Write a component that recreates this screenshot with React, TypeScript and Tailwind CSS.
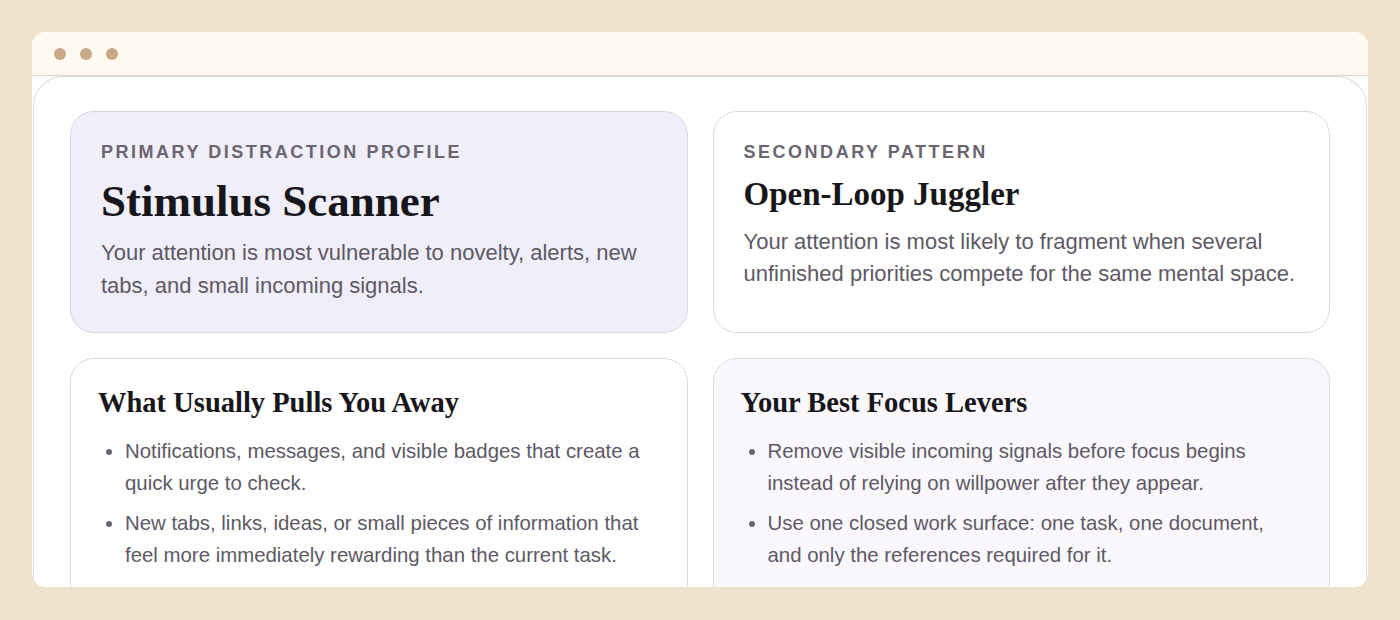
const serif = "font-['Liberation_Serif',_'Times_New_Roman',_serif]";
const sans = "font-['Liberation_Sans',_Arial,_sans-serif]";

function Label({ children }: { children: string }) {
  return (
    <div className={`${sans} text-[18px] font-bold uppercase leading-6 tracking-[0.14em] text-[#6a6571]`}>
      {children}
    </div>
  );
}

function BulletList({ items }: { items: string[] }) {
  return (
    <ul className={`${sans} mt-[15px] flex list-disc flex-col gap-2 pl-[27px] text-[20.4px] leading-8 text-[#5d5965] marker:text-[#6a6571]`}>
      {items.map((item) => (
        <li key={item}>{item}</li>
      ))}
    </ul>
  );
}

export default function App() {
  return (
    <div className="h-[620px] w-[1400px] bg-[#f0e2cc] p-8 pb-[33px]">
      <div className="flex h-full flex-col overflow-hidden rounded-[14px] bg-white">
        <div className="flex h-[44px] shrink-0 items-center gap-[14px] border-b border-[#e6d6bd] bg-[#fef9f1] pl-[22px]">
          <span className="h-3 w-3 rounded-full bg-[#c9a886]" />
          <span className="h-3 w-3 rounded-full bg-[#c9a886]" />
          <span className="h-3 w-3 rounded-full bg-[#c9a886]" />
        </div>
        <div className="mx-px flex-1 overflow-hidden rounded-t-[30px] border border-b-0 border-[#dedbe1] bg-white px-9 pt-[34px]">
          <div className="grid grid-cols-2 gap-[25px]">
            <section className="rounded-[24px] border border-[#d9d5e3] bg-[#f0eef8] px-[30px] pb-[30px] pt-[28px]">
              <Label>Primary Distraction Profile</Label>
              <h1 className={`${serif} mt-[11px] text-[45px] font-bold leading-[52px] text-[#17161a]`}>
                Stimulus Scanner
              </h1>
              <p className={`${sans} mt-[9px] text-[22px] leading-[33px] text-[#5d5965]`}>
                Your attention is most vulnerable to novelty, alerts, new tabs, and small incoming signals.
              </p>
            </section>
            <section className="rounded-[24px] border border-[#dcd9df] bg-white px-[30px] pb-[30px] pt-[28px]">
              <Label>Secondary Pattern</Label>
              <h2 className={`${serif} mt-[11px] text-[33px] font-bold leading-[38px] text-[#17161a]`}>
                Open-Loop Juggler
              </h2>
              <p className={`${sans} mt-[13px] text-[22px] leading-8 text-[#5d5965]`}>
                Your attention is most likely to fragment when several unfinished priorities compete for the same mental space.
              </p>
            </section>
            <section className="h-[260px] rounded-[24px] border border-[#dcd9df] bg-white px-[27px] pt-[27px]">
              <h3 className={`${serif} text-[28.5px] font-bold leading-[34px] text-[#17161a]`}>What Usually Pulls You Away</h3>
              <BulletList
                items={[
                  'Notifications, messages, and visible badges that create a quick urge to check.',
                  'New tabs, links, ideas, or small pieces of information that feel more immediately rewarding than the current task.',
                ]}
              />
            </section>
            <section className="h-[260px] rounded-[24px] border border-[#dcd9df] bg-[#faf8fc] px-[27px] pt-[27px]">
              <h3 className={`${serif} text-[28.5px] font-bold leading-[34px] text-[#17161a]`}>Your Best Focus Levers</h3>
              <BulletList
                items={[
                  'Remove visible incoming signals before focus begins instead of relying on willpower after they appear.',
                  'Use one closed work surface: one task, one document, and only the references required for it.',
                ]}
              />
            </section>
          </div>
        </div>
      </div>
    </div>
  );
}
